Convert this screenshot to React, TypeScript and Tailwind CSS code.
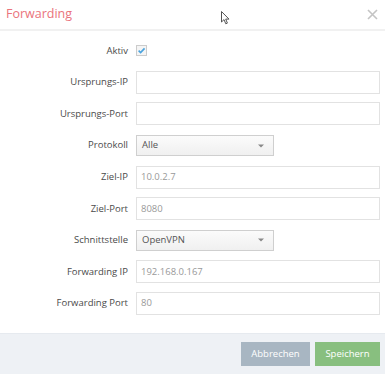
import React from "react";

type Field = {
  label: string;
  kind: "text" | "select" | "check";
  value?: string;
};

const fields: Field[] = [
  { label: "Aktiv", kind: "check" },
  { label: "Ursprungs-IP", kind: "text", value: "" },
  { label: "Ursprungs-Port", kind: "text", value: "" },
  { label: "Protokoll", kind: "select", value: "Alle" },
  { label: "Ziel-IP", kind: "text", value: "10.0.2.7" },
  { label: "Ziel-Port", kind: "text", value: "8080" },
  { label: "Schnittstelle", kind: "select", value: "OpenVPN" },
  { label: "Forwarding IP", kind: "text", value: "192.168.0.167" },
  { label: "Forwarding Port", kind: "text", value: "80" },
];

function Control({ field }: { field: Field }) {
  if (field.kind === "check") {
    return (
      <span className="flex h-[11px] w-[11px] items-center justify-center border border-[#cccccc] bg-[#f5f5f5]">
        <svg width="9" height="9" viewBox="0 0 10 10">
          <path d="M1.8 5.2 L4 7.3 L8.4 2.6" fill="none" stroke="#4aa3de" strokeWidth="1.8" />
        </svg>
      </span>
    );
  }
  if (field.kind === "select") {
    return (
      <div className="flex h-[21px] w-[138px] items-center justify-between border border-[#cfcfcf] bg-gradient-to-b from-[#fbfbfb] to-[#f0f0f0] pl-[5px] pr-[9px] text-[#555]">
        <span>{field.value}</span>
        <svg width="6" height="4" viewBox="0 0 6 4">
          <path d="M0 0.5 H6 L3 3.5 Z" fill="#888" />
        </svg>
      </div>
    );
  }
  return (
    <div className="flex h-[23px] flex-1 items-center border border-[#e2e2e2] bg-white px-[4px] text-[#999]">
      {field.value}
    </div>
  );
}

export default function App() {
  return (
    <div className="relative h-[375px] w-[385px] overflow-hidden bg-white font-['Open_Sans',sans-serif] text-[9.5px]">
      <header className="flex h-[31px] items-center justify-between border-b-2 border-[#f1f1f1] pl-[6px] pr-[7px]">
        <h1 className="text-[12.5px] text-[#ea737c]">Forwarding</h1>
        <svg width="11" height="11" viewBox="0 0 11 11">
          <path d="M1 1 L10 10 M10 1 L1 10" stroke="#c4c4c4" strokeWidth="1.6" />
        </svg>
      </header>

      <div className="flex flex-col pt-[4px] pb-[14px] pr-[5px]">
        {fields.map((f) => (
          <div key={f.label} className="flex h-[31.6px] items-center gap-[8px]">
            <label className="w-[128px] shrink-0 text-right text-[#4a4a4a]">{f.label}</label>
            <Control field={f} />
          </div>
        ))}
      </div>

      <footer className="flex h-[41px] items-start justify-end gap-[5px] border-t border-[#e6eaef] bg-[#eef1f5] pr-[5px] pt-[8px]">
        <button className="h-[24px] w-[69px] bg-[#a8b6c2] text-white">Abbrechen</button>
        <button className="h-[24px] w-[65px] bg-[#88bf7f] text-white">Speichern</button>
      </footer>

      <svg className="absolute left-[221px] top-[11px]" width="9" height="14" viewBox="0 0 9 14">
        <path d="M0.5 0.5 V11 L3 8.6 L4.8 12.8 L6.4 12.1 L4.7 8.1 L8 8.1 Z" fill="#fff" stroke="#555" strokeWidth="1" strokeLinejoin="round" />
      </svg>
    </div>
  );
}
